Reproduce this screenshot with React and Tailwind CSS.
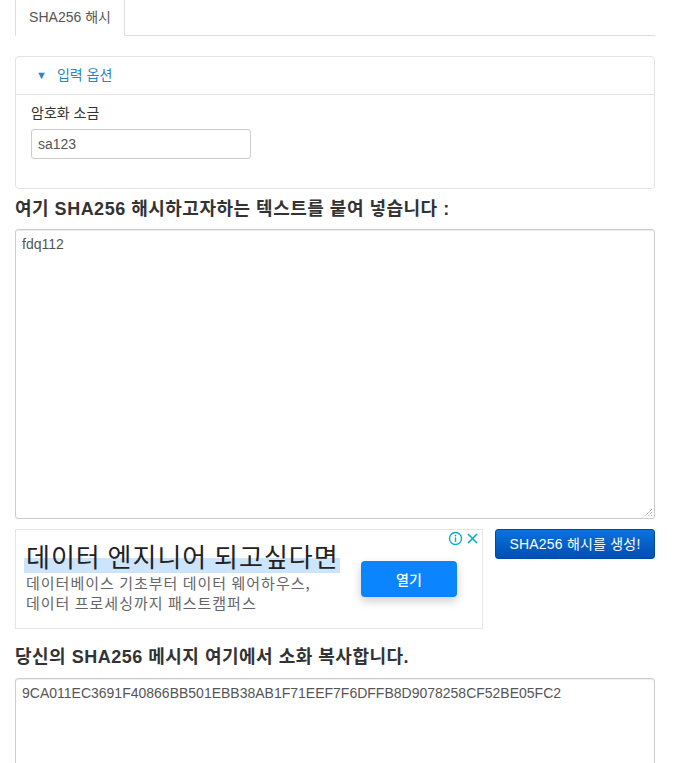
export default function App() {
  const ff = { fontFamily: '"Liberation Sans", Arial, "Noto Sans CJK KR", sans-serif' };
  const kr = { fontFamily: '"Noto Sans CJK KR", sans-serif' };
  return (
    <div className="w-[675px] min-h-[763px] bg-white pl-[15px] pr-[20px] text-[#333]" style={ff}>
      {/* Tabs */}
      <div className="flex h-[36px] border-b border-[#ddd]">
        <div className="-mb-px flex h-[36px] w-[110px] items-center justify-center border-x border-[#ddd] border-b border-b-white bg-white text-[14px] text-[#555]">
          SHA256 해시
        </div>
      </div>

      {/* Options panel */}
      <div className="mt-[20px] rounded-[4px] border border-[#e3e3e3]">
        <div className="flex h-[38px] items-center border-b border-[#e3e3e3] pl-[20px] text-[14px] text-[#2a86c6]">
          <span className="mr-[10px] text-[11px]">▼</span>
          <span>입력 옵션</span>
        </div>
        <div className="px-[15px] pt-[8px] pb-[29px]">
          <div className="text-[14px] leading-[20px] text-[#333]">암호화 소금</div>
          <div className="mt-[6px] flex h-[30px] w-[220px] items-center rounded-[3px] border border-[#ccc] px-[6px] text-[14px] text-[#555]">
            sa123
          </div>
        </div>
      </div>

      {/* Heading 1 */}
      <div className="mt-[8px] text-[18px] font-bold leading-[24px] tracking-[0.5px] text-[#333]">
        여기 SHA256 해시하고자하는 텍스트를 붙여 넣습니다 :
      </div>

      {/* Textarea 1 */}
      <div className="relative mt-[8px] h-[290px] rounded-[3px] border border-[#ccc] px-[6px] pt-[4px] text-[14px] text-[#555] shadow-[inset_0_1px_1px_rgba(0,0,0,0.075)]">
        fdq112
        <svg className="absolute right-[1px] bottom-[1px]" width="10" height="10" viewBox="0 0 10 10">
          <path d="M9 2 L2 9 M9 5 L5 9 M9 8 L8 9" stroke="#888" strokeWidth="1" strokeDasharray="1 1" fill="none" />
        </svg>
      </div>

      {/* Ad + button */}
      <div className="mt-[10px] flex gap-[12px]">
        <div className="relative flex h-[100px] w-[468px] border border-[#e5e5e5]">
          <div className="flex flex-col pl-[10px] pt-[10px]">
            <div className="relative text-[26px] leading-[32px] tracking-[1px] text-[#222]" style={kr}>
              <span className="absolute left-[-2px] right-[-1px] top-[18px] h-[15px] bg-[#cce4fc]"></span>
              <span className="relative">데이터 엔지니어 되고싶다면</span>
            </div>
            <div className="mt-[1px] text-[15px] leading-[20px] tracking-[1px] text-[#666]" style={kr}>
              데이터베이스 기초부터 데이터 웨어하우스,
              <br />
              데이터 프로세싱까지 패스트캠퍼스
            </div>
          </div>
          <div className="absolute left-[345px] top-[31px] flex h-[36px] w-[96px] items-center justify-center rounded-[4px] bg-[#0a85ff] text-[14px] font-medium text-white shadow-[0_4px_10px_rgba(0,0,0,0.2)]" style={kr}>
            열기
          </div>
          <div className="absolute right-[2px] top-[1px] flex items-center gap-[2px]">
            <svg width="15" height="15" viewBox="0 0 15 15">
              <circle cx="7.5" cy="7.5" r="6" stroke="#00aecd" strokeWidth="1.3" fill="none" />
              <circle cx="7.5" cy="4.6" r="0.9" fill="#00aecd" />
              <rect x="6.8" y="6.3" width="1.4" height="4.6" fill="#00aecd" />
            </svg>
            <svg width="15" height="15" viewBox="0 0 15 15">
              <path d="M3 3 L12 12 M12 3 L3 12" stroke="#00aecd" strokeWidth="1.6" fill="none" />
            </svg>
          </div>
        </div>
        <div className="flex h-[30px] w-[160px] items-center justify-center rounded-[3px] border border-[#0048a8] bg-gradient-to-b from-[#0d72dc] to-[#004fb6] text-[14px] tracking-[0.2px] text-white">
          SHA256 해시를 생성!
        </div>
      </div>

      {/* Heading 2 */}
      <div className="mt-[16px] text-[18px] font-bold leading-[24px] tracking-[0.5px] text-[#333]">
        당신의 SHA256 메시지 여기에서 소화 복사합니다.
      </div>

      {/* Textarea 2 */}
      <div className="mt-[9px] h-[120px] rounded-[3px] border border-[#ccc] px-[6px] pt-[4px] text-[14px] text-[#555] shadow-[inset_0_1px_1px_rgba(0,0,0,0.075)]">
        9CA011EC3691F40866BB501EBB38AB1F71EEF7F6DFFB8D9078258CF52BE05FC2
      </div>
    </div>
  );
}
